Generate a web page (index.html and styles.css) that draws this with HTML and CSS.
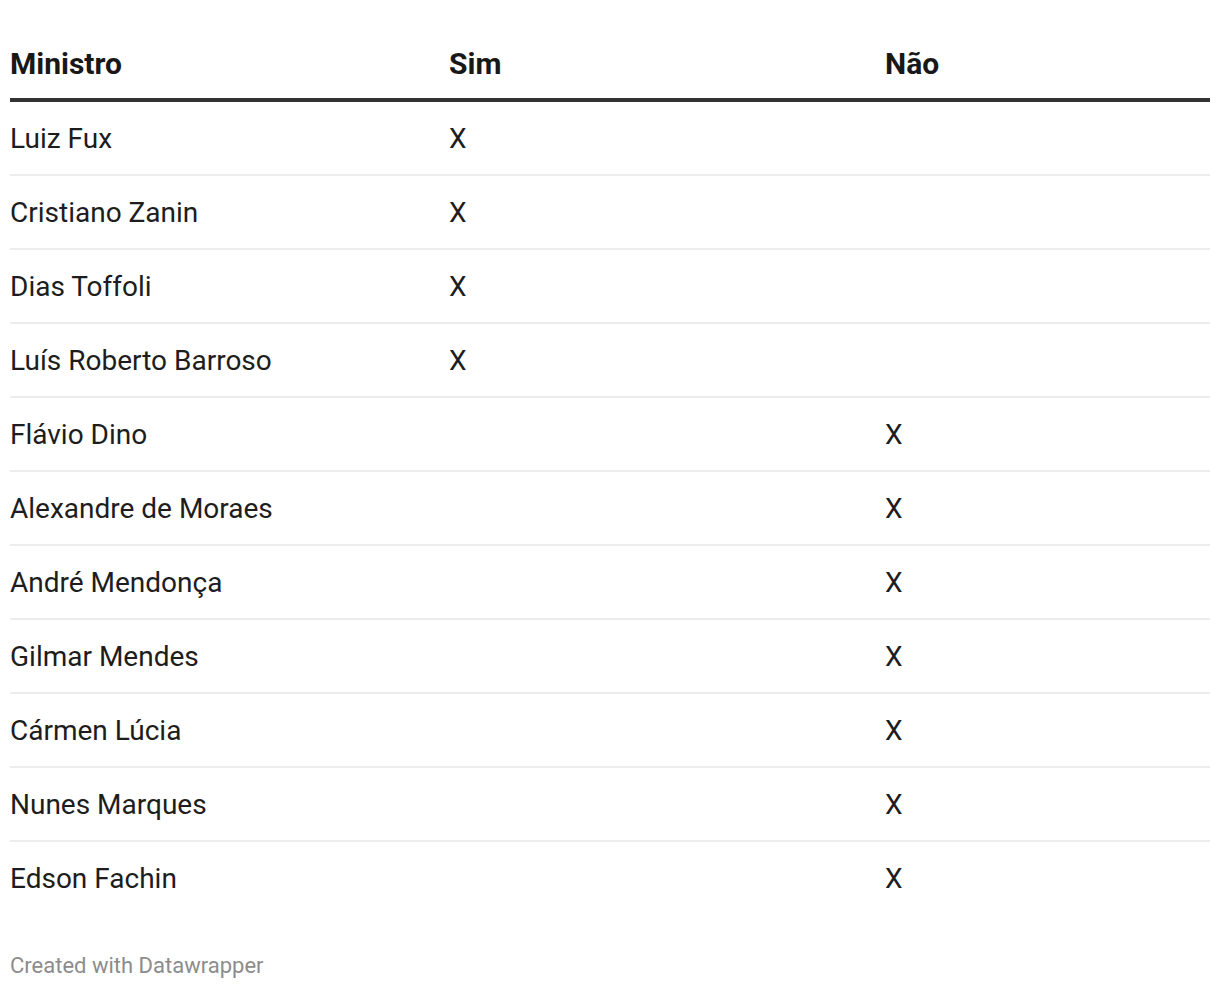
FILE: index.html
```html
<!DOCTYPE html>
<html lang="pt">
<head>
<meta charset="utf-8">
<title>Ministros</title>
<link rel="stylesheet" href="styles.css">
</head>
<body>
<div class="wrap">
  <div class="table">
    <div class="row head">
      <div class="cell">Ministro</div>
      <div class="cell">Sim</div>
      <div class="cell">Não</div>
    </div>
    <div class="row"><div class="cell">Luiz Fux</div><div class="cell">X</div><div class="cell"></div></div>
    <div class="row"><div class="cell">Cristiano Zanin</div><div class="cell">X</div><div class="cell"></div></div>
    <div class="row"><div class="cell">Dias Toffoli</div><div class="cell">X</div><div class="cell"></div></div>
    <div class="row"><div class="cell">Luís Roberto Barroso</div><div class="cell">X</div><div class="cell"></div></div>
    <div class="row"><div class="cell">Flávio Dino</div><div class="cell"></div><div class="cell">X</div></div>
    <div class="row"><div class="cell">Alexandre de Moraes</div><div class="cell"></div><div class="cell">X</div></div>
    <div class="row"><div class="cell">André Mendonça</div><div class="cell"></div><div class="cell">X</div></div>
    <div class="row"><div class="cell">Gilmar Mendes</div><div class="cell"></div><div class="cell">X</div></div>
    <div class="row"><div class="cell">Cármen Lúcia</div><div class="cell"></div><div class="cell">X</div></div>
    <div class="row"><div class="cell">Nunes Marques</div><div class="cell"></div><div class="cell">X</div></div>
    <div class="row last"><div class="cell">Edson Fachin</div><div class="cell"></div><div class="cell">X</div></div>
  </div>
  <div class="footer">Created with Datawrapper</div>
</div>
</body>
</html>
```

FILE: styles.css
```css
* { box-sizing: border-box; }
html, body { margin: 0; padding: 0; background: #fff; }
body {
  font-family: Roboto, "Liberation Sans", sans-serif;
  color: #1d1d1d;
}
.wrap { padding: 0 10px; width: 1220px; }
.table { display: flex; flex-direction: column; }
.row {
  display: grid;
  grid-template-columns: 439px 436px 1fr;
  height: 74px;
  border-bottom: 2px solid #ececec;
  font-size: 28px;
  line-height: 74px;
}
.row.last { border-bottom: none; height: 72px; }
.row.head {
  height: 102px;
  padding-top: 46px;
  line-height: 36px;
  font-size: 30px;
  font-weight: 700;
  color: #181818;
  border-bottom: 4px solid #333;
}
.cell { white-space: nowrap; }
.footer {
  margin-top: 39px;
  font-size: 22px;
  line-height: 26px;
  color: #8c8c8c;
}
```
